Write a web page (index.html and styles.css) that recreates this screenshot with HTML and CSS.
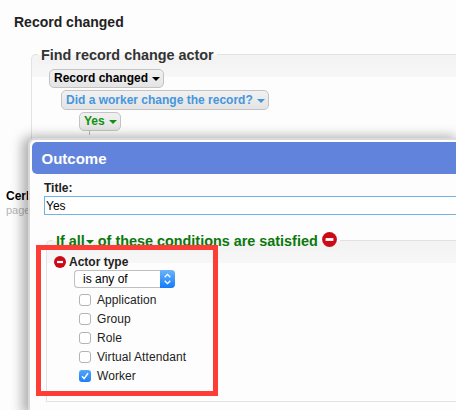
FILE: index.html
```html
<!DOCTYPE html>
<html lang="en">
<head>
<meta charset="utf-8">
<title>Record changed</title>
<link rel="stylesheet" href="styles.css">
</head>
<body>
<main class="page">
  <h1 class="page-title">Record changed</h1>
  <section class="group behavior">
    <h2 class="legend">Find record change actor</h2>
    <div class="tree">
      <button class="node root">Record changed<i class="caret"></i></button>
      <button class="node question">Did a worker change the record?<i class="caret"></i></button>
      <button class="node yes">Yes<i class="caret"></i></button>
      <span class="branch"></span>
    </div>
  </section>
  <footer class="credit"><b>Cerb</b><span>page</span></footer>
</main>

<section class="dialog">
  <header class="dialog-header">Outcome</header>
  <div class="dialog-body">
    <label class="field-label" for="title">Title:</label>
    <input class="field" id="title" type="text" value="Yes">
    <section class="group conditions">
      <h2 class="legend"><span>If all</span><i class="caret"></i><span class="rest">of these conditions are satisfied</span><svg class="minus" width="15" height="15" viewBox="0 0 15 15"><circle cx="7.5" cy="7.5" r="7.4" fill="#cb0a18"/><path d="M3.6 6.1h7.8v2.8H3.6z" fill="#fff"/></svg></h2>
      <div class="condition">
        <div class="condition-name"><svg width="12" height="12" viewBox="0 0 12 12"><circle cx="6" cy="6" r="6" fill="#cb0a18"/><path d="M3 4.9h6v2.2H3z" fill="#fff"/></svg><b>Actor type</b></div>
        <div class="select"><span>is any of</span><svg width="15" height="18" viewBox="0 0 15 18"><path d="M4.7 7.2 7.5 4.4l2.8 2.8M4.7 10.8l2.8 2.8 2.8-2.8" fill="none" stroke="#fff" stroke-width="1.3"/></svg></div>
        <ul class="options">
          <li><i class="box"></i>Application</li>
          <li><i class="box"></i>Group</li>
          <li><i class="box"></i>Role</li>
          <li><i class="box"></i>Virtual Attendant</li>
          <li><i class="box checked"><svg width="12" height="12" viewBox="0 0 12 12"><path d="M3 6.3 5.1 8.6 9 3.2" fill="none" stroke="#fff" stroke-width="1.5"/></svg></i>Worker</li>
        </ul>
      </div>
    </section>
  </div>
</section>
<div class="highlight"></div>
</body>
</html>
```
FILE: styles.css
```css
* { box-sizing: border-box; }
body {
  margin: 0;
  width: 456px;
  height: 410px;
  position: relative;
  overflow: hidden;
  background: #fdfdfd;
  font: 12px/14px "Liberation Sans", Arial, sans-serif;
  color: #222;
}
.page { padding: 14px 0 0; }
.page-title { margin: 0 0 0 14px; font-size: 14px; line-height: 16px; }
.group {
  border: 1px solid #e2e2e2;
  border-right: 0;
  border-radius: 5px 0 0 0;
  background: linear-gradient(#f3f3f3, #f7f7f7 22px, #fdfdfd 22px);
}
.legend {
  display: flex;
  width: max-content;
  margin: -9px 0 0 6px;
  padding: 0 3px;
  background: linear-gradient(#fdfdfd 9px, #f3f3f3 9px);
  font-size: 14.4px;
  line-height: 18px;
}
.behavior { margin: 24px 0 0 31px; height: 112px; }
.behavior .legend { color: #333; }
.tree {
  display: flex;
  flex-direction: column;
  align-items: flex-start;
  gap: 2px;
  padding: 5px 0 0 17px;
}
.caret {
  width: 0;
  height: 0;
  border: solid transparent;
  border-width: 4px 3.5px 0;
  border-top-color: currentColor;
}
.node {
  display: flex;
  align-items: center;
  height: 19px;
  padding: 0 4px;
  border: 1px solid #c3c3c3;
  border-radius: 5px;
  background: linear-gradient(#f1f1f1, #e4e4e4);
  font: bold 12px/15px "Liberation Sans", Arial, sans-serif;
  color: #000;
}
.node .caret { margin: 1px -1px 0 4px; border-width: 4px 4px 0; }
.question { margin-left: 12px; height: 20px; color: #4696dd; }
.yes { margin-left: 30px; color: #129012; }
.branch { width: 1px; height: 4px; margin: -2px 0 0 40px; background: #bbb; }
.credit {
  display: flex;
  flex-direction: column;
  margin: 23px 0 0 6px;
  color: #000;
}
.credit span { margin-top: 0; font-size: 11px; color: #b5b5b5; }
.dialog {
  position: absolute;
  left: 30px;
  top: 140px;
  right: 0;
  bottom: 0;
  padding: 2px 0 0 2px;
  border-radius: 5px 0 0 0;
  background: #fdfdfd;
  box-shadow: 0 0 0 2px rgba(220, 220, 220, .9), -4px 0 12px 4px rgba(0, 0, 0, .3);
}
.dialog-header {
  height: 32px;
  padding-left: 9.5px;
  border-radius: 5px 0 0 5px;
  background: #6283dc;
  color: #fff;
  font-size: 15px;
  font-weight: bold;
  line-height: 34px;
}
.dialog-body { padding: 7px 0 0 12px; }
.field-label { display: block; font-weight: bold; line-height: 15px; }
.field {
  display: block;
  width: 100%;
  height: 19px;
  padding: 0 1px;
  border: 1px solid #70b2e4;
  border-right: 0;
  border-radius: 0;
  background: #fff;
  font: 12px/17px "Liberation Sans", Arial, sans-serif;
  color: #000;
}
.conditions { height: 162px; margin: 25px 0 0 2px; }
.conditions .legend { color: #0b780b; }
.legend .caret { border-width: 4px 4px 0; margin: 8px 4px 0 1px; }
.minus { margin: 0 0 0 4px; }
.condition { padding: 5px 0 0 7px; }
.condition-name { display: flex; align-items: center; gap: 3px; height: 14px; }
.select {
  display: flex;
  justify-content: space-between;
  width: 101px;
  height: 18px;
  margin: 1px 0 0 20px;
  padding-left: 8px;
  border: 1px solid #bfbfbf;
  border-right: 0;
  border-radius: 4px;
  background: #fff;
  color: #000;
  line-height: 17px;
}
.select svg {
  height: 18px;
  margin: -1px 0;
  border-radius: 0 4px 4px 0;
  background: linear-gradient(#6cb3fa, #137df8);
}
.options { margin: 2px 0 0 25px; padding: 0; list-style: none; letter-spacing: .07px; }
.options li { display: flex; align-items: center; gap: 6px; height: 19px; }
.box {
  width: 12px;
  height: 12px;
  border: 1px solid #b4b4b4;
  border-radius: 3px;
  background: #fff;
}
.checked { border: 0; background: linear-gradient(#52a5fb, #1b80f8); }
.checked svg { display: block; }
.highlight {
  position: absolute;
  left: 36px;
  top: 245px;
  width: 182px;
  height: 151px;
  border: 5px solid #ff3d37;
}
```
